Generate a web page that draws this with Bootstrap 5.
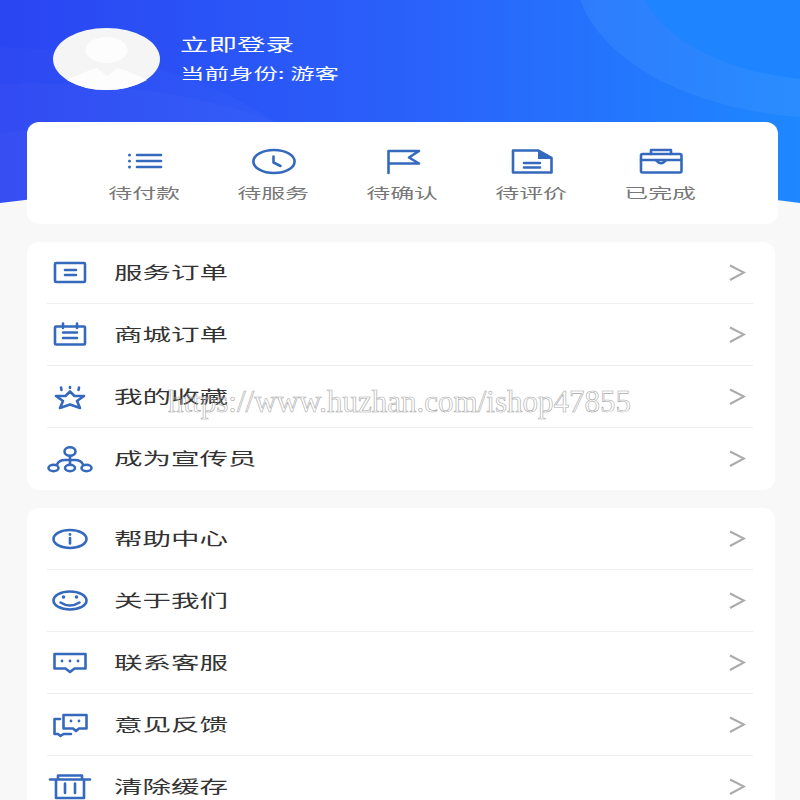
<!DOCTYPE html>
<html lang="zh-CN">
<head>
    <meta charset="UTF-8">
    <meta name="viewport" content="width=device-width, initial-scale=1.0">
    <title>个人中心</title>
    <link href="https://cdn.jsdelivr.net/npm/bootstrap@5.3.0/dist/css/bootstrap.min.css" rel="stylesheet">
    <style>
        html, body {
            height: 800px;
            overflow: hidden;
        }
        body {
            background-color: #f8f8f8;
            font-family: "Noto Sans CJK SC", "Liberation Sans", sans-serif;
            position: relative;
        }
        svg {
            display: block;
        }
        /* the screenshot is stretched sideways, so the text is too */
        .wide-text {
            display: inline-block;
            white-space: nowrap;
            transform: scaleX(1.7);
            transform-origin: left center;
        }
        .hero-bg {
            position: absolute;
            top: 0;
            left: 0;
        }
        .page-wrap {
            position: relative;
        }
        .hero-row {
            height: 122px;
            padding: 28px 0 0 53px;
        }
        .avatar-box {
            width: 107px;
            height: 62px;
            margin-right: 21px;
        }
        .user-name {
            font-size: 16.8px;
            line-height: 22px;
            margin-top: 5px;
            margin-left: -1px;
        }
        .user-role {
            font-size: 14.4px;
            line-height: 20px;
            margin-top: 8px;
            margin-left: -1px;
        }
        .order-card {
            margin: 0 22px 18px 27px;
            height: 102px;
            padding: 26px 53px 0;
            border: 0;
            border-radius: 12px;
        }
        .order-col {
            width: 129px;
            flex: none;
        }
        .order-label {
            font-size: 14.1px;
            line-height: 20px;
            margin-top: 6px;
            margin-left: -1px;
            color: #777;
        }
        .order-label .wide-text {
            transform-origin: center center;
        }
        .menu-card {
            margin: 0 25px 18px 27px;
            border: 0;
            border-radius: 12px;
            overflow: hidden;
        }
        .menu-row {
            height: 62px;
            margin: 0 22px 0 20px;
            padding: 0;
            background: none;
            border-color: #eeeeee;
        }
        .menu-row svg.menu-icon {
            margin-left: -2px;
            margin-right: 19px;
        }
        .menu-text {
            font-size: 16.8px;
            line-height: 24px;
            margin-top: -2px;
            color: #333;
        }
        .menu-arrow {
            margin-left: auto;
            margin-right: 7px;
        }
        .watermark {
            position: absolute;
            left: 168px;
            top: 384px;
            font-family: "Liberation Serif", serif;
            font-size: 31px;
            line-height: 36px;
            color: transparent;
            -webkit-text-stroke: 0.6px #a8a8a8;
            white-space: nowrap;
        }
        .ic {
            fill: none;
            stroke: #3569bd;
            stroke-width: 2.6;
            stroke-linecap: round;
            stroke-linejoin: round;
        }
        .ic-fill {
            fill: #3569bd;
            stroke: none;
        }
    </style>
</head>
<body>
    <svg class="hero-bg" width="800" height="215" viewBox="0 0 800 215">
        <defs>
            <linearGradient id="heroGrad" x1="0" y1="0" x2="1" y2="0">
                <stop offset="0" stop-color="#2a45f2"/>
                <stop offset="0.5" stop-color="#2a60fa"/>
                <stop offset="1" stop-color="#1e88ff"/>
            </linearGradient>
        </defs>
        <rect width="800" height="215" fill="url(#heroGrad)"/>
        <path d="M0 47 C110 50 210 75 275 122 L275 215 L0 215 Z" fill="#ffffff" opacity="0.02"/>
        <path d="M0 84 C100 80 210 95 275 122 L275 215 L0 215 Z" fill="#ffffff" opacity="0.02"/>
        <path d="M0 133 C60 125 120 125 170 135 L170 215 L0 215 Z" fill="#ffffff" opacity="0.02"/>
        <ellipse cx="830" cy="-30" rx="255" ry="148" fill="#4d9bff" opacity="0.25"/>
        <ellipse cx="830" cy="-30" rx="192" ry="110" fill="#1f84ff"/>
        <path d="M0 203 Q400 150 800 203 V215 H0 Z" fill="#f8f8f8"/>
    </svg>

    <div class="page-wrap">
        <div class="hero-row d-flex">
            <div class="avatar-box">
                <svg width="107" height="62" viewBox="0 0 107 62">
                    <ellipse cx="53.5" cy="31" rx="53.5" ry="31" fill="#f5f5f6"/>
                    <ellipse cx="53.5" cy="22" rx="21" ry="13" fill="#fdfdfd"/>
                    <path d="M14 52 Q30 44 44 40 L54 48 L64 40 Q80 44 94 52 Q76 62 53.5 62 Q30 62 14 52 Z" fill="#fdfdfd"/>
                </svg>
            </div>
            <div class="text-white">
                <div class="user-name"><span class="wide-text">立即登录</span></div>
                <div class="user-role"><span class="wide-text">当前身份: 游客</span></div>
            </div>
        </div>

        <div class="card order-card flex-row">
            <div class="order-col d-flex flex-column align-items-center">
                <svg width="60" height="28" viewBox="0 0 60 28">
                    <circle class="ic-fill" cx="14.5" cy="7" r="1.5"/>
                    <circle class="ic-fill" cx="14.5" cy="13" r="1.5"/>
                    <circle class="ic-fill" cx="14.5" cy="19" r="1.5"/>
                    <path class="ic" d="M22 7H46M22 13H46M22 19H46"/>
                </svg>
                <div class="order-label"><span class="wide-text">待付款</span></div>
            </div>
            <div class="order-col d-flex flex-column align-items-center">
                <svg width="60" height="28" viewBox="0 0 60 28">
                    <ellipse class="ic" cx="30" cy="13.5" rx="20.6" ry="11.5"/>
                    <path class="ic" d="M29.5 8.5V14.5L36.5 18"/>
                </svg>
                <div class="order-label"><span class="wide-text">待服务</span></div>
            </div>
            <div class="order-col d-flex flex-column align-items-center">
                <svg width="60" height="28" viewBox="0 0 60 28">
                    <path class="ic" d="M15.5 25V3H46L36 9.5L46 15.5H15.5"/>
                </svg>
                <div class="order-label"><span class="wide-text">待确认</span></div>
            </div>
            <div class="order-col d-flex flex-column align-items-center">
                <svg width="60" height="28" viewBox="0 0 60 28">
                    <path class="ic" d="M11 2.5H36L49.5 10V24.5H11Z"/>
                    <path class="ic-fill" d="M36 2.5L49.5 10V11H36Z"/>
                    <path class="ic" d="M22 15H38M22 19.5H38"/>
                </svg>
                <div class="order-label"><span class="wide-text">待评价</span></div>
            </div>
            <div class="order-col d-flex flex-column align-items-center">
                <svg width="60" height="28" viewBox="0 0 60 28">
                    <rect class="ic" x="10" y="6" width="40.5" height="18.5" rx="1.5"/>
                    <path class="ic" d="M20 6V2H40V6M10 12H50M25 12.5Q30 18 35 12.5"/>
                </svg>
                <div class="order-label"><span class="wide-text">已完成</span></div>
            </div>
        </div>

        <div class="card menu-card">
            <ul class="list-group list-group-flush">
                <li class="list-group-item menu-row d-flex align-items-center">
                    <svg class="menu-icon" width="50" height="30" viewBox="0 0 50 30">
                        <rect class="ic" x="10" y="5" width="30" height="19" rx="1"/>
                        <path class="ic" d="M20 12H31M20 17H31"/>
                    </svg>
                    <span class="menu-text wide-text">服务订单</span>
                    <svg class="menu-arrow" width="17" height="18" viewBox="0 0 17 18">
                        <path d="M1 1.5L15 8.5L1 16" fill="none" stroke="#aaaaaa" stroke-width="2"/>
                    </svg>
                </li>
                <li class="list-group-item menu-row d-flex align-items-center">
                    <svg class="menu-icon" width="50" height="30" viewBox="0 0 50 30">
                        <rect class="ic" x="10" y="6.5" width="30" height="18" rx="1"/>
                        <path class="ic" d="M18 3.5V8M32 3.5V8M18 12.5H32M18 18H32"/>
                    </svg>
                    <span class="menu-text wide-text">商城订单</span>
                    <svg class="menu-arrow" width="17" height="18" viewBox="0 0 17 18">
                        <path d="M1 1.5L15 8.5L1 16" fill="none" stroke="#aaaaaa" stroke-width="2"/>
                    </svg>
                </li>
                <li class="list-group-item menu-row d-flex align-items-center">
                    <svg class="menu-icon" width="50" height="30" viewBox="0 0 50 30">
                        <path class="ic" d="M25 9.5L29.5 14H39L32 19L35 26L25 22.5L15 26L18 19L11 14H20.5Z"/>
                        <path class="ic" d="M16 5.5L16.5 8M25 5V6M34 5.5L33.5 8"/>
                    </svg>
                    <span class="menu-text wide-text">我的收藏</span>
                    <svg class="menu-arrow" width="17" height="18" viewBox="0 0 17 18">
                        <path d="M1 1.5L15 8.5L1 16" fill="none" stroke="#aaaaaa" stroke-width="2"/>
                    </svg>
                </li>
                <li class="list-group-item menu-row d-flex align-items-center border-0">
                    <svg class="menu-icon" width="50" height="30" viewBox="0 0 50 30">
                        <ellipse class="ic" cx="25" cy="7.5" rx="5.5" ry="4.2"/>
                        <ellipse class="ic" cx="8.5" cy="24" rx="5" ry="3.2"/>
                        <ellipse class="ic" cx="25" cy="24" rx="5" ry="3.2"/>
                        <ellipse class="ic" cx="41.5" cy="24" rx="5" ry="3.2"/>
                        <path class="ic" d="M25 12V20.5M12 20.5Q14 16 20 16H30Q36 16 38 20.5"/>
                    </svg>
                    <span class="menu-text wide-text">成为宣传员</span>
                    <svg class="menu-arrow" width="17" height="18" viewBox="0 0 17 18">
                        <path d="M1 1.5L15 8.5L1 16" fill="none" stroke="#aaaaaa" stroke-width="2"/>
                    </svg>
                </li>
            </ul>
        </div>

        <div class="card menu-card">
            <ul class="list-group list-group-flush">
                <li class="list-group-item menu-row d-flex align-items-center">
                    <svg class="menu-icon" width="50" height="30" viewBox="0 0 50 30">
                        <ellipse class="ic" cx="25" cy="15" rx="16.5" ry="9"/>
                        <circle class="ic-fill" cx="25" cy="10.5" r="1.4"/>
                        <path class="ic" d="M25 14V19.5"/>
                    </svg>
                    <span class="menu-text wide-text">帮助中心</span>
                    <svg class="menu-arrow" width="17" height="18" viewBox="0 0 17 18">
                        <path d="M1 1.5L15 8.5L1 16" fill="none" stroke="#aaaaaa" stroke-width="2"/>
                    </svg>
                </li>
                <li class="list-group-item menu-row d-flex align-items-center">
                    <svg class="menu-icon" width="50" height="30" viewBox="0 0 50 30">
                        <ellipse class="ic" cx="25" cy="14.5" rx="16.5" ry="9"/>
                        <circle class="ic-fill" cx="18.5" cy="11" r="1.8"/>
                        <circle class="ic-fill" cx="31.5" cy="11" r="1.8"/>
                        <path class="ic" d="M15.5 16.5Q25 22.5 34.5 16.5"/>
                    </svg>
                    <span class="menu-text wide-text">关于我们</span>
                    <svg class="menu-arrow" width="17" height="18" viewBox="0 0 17 18">
                        <path d="M1 1.5L15 8.5L1 16" fill="none" stroke="#aaaaaa" stroke-width="2"/>
                    </svg>
                </li>
                <li class="list-group-item menu-row d-flex align-items-center">
                    <svg class="menu-icon" width="50" height="30" viewBox="0 0 50 30">
                        <path class="ic" d="M9.5 6H40.5V20.5H29.5L25 24L20.5 20.5H9.5Z"/>
                        <circle class="ic-fill" cx="17" cy="13" r="1.4"/>
                        <circle class="ic-fill" cx="25" cy="13" r="1.4"/>
                        <circle class="ic-fill" cx="33" cy="13" r="1.4"/>
                    </svg>
                    <span class="menu-text wide-text">联系客服</span>
                    <svg class="menu-arrow" width="17" height="18" viewBox="0 0 17 18">
                        <path d="M1 1.5L15 8.5L1 16" fill="none" stroke="#aaaaaa" stroke-width="2"/>
                    </svg>
                </li>
                <li class="list-group-item menu-row d-flex align-items-center">
                    <svg class="menu-icon" width="50" height="30" viewBox="0 0 50 30">
                        <path class="ic" d="M18.5 5H41.5V18.5H34L31 21L28 18.5H18.5Z"/>
                        <circle class="ic-fill" cx="26" cy="11" r="1.4"/>
                        <circle class="ic-fill" cx="34" cy="11" r="1.4"/>
                        <path class="ic" d="M15 9H9.5V24H13L15.5 26L18.5 24H26"/>
                    </svg>
                    <span class="menu-text wide-text">意见反馈</span>
                    <svg class="menu-arrow" width="17" height="18" viewBox="0 0 17 18">
                        <path d="M1 1.5L15 8.5L1 16" fill="none" stroke="#aaaaaa" stroke-width="2"/>
                    </svg>
                </li>
                <li class="list-group-item menu-row d-flex align-items-center border-0">
                    <svg class="menu-icon" width="50" height="30" viewBox="0 0 50 30">
                        <path class="ic" d="M5 7.5H45M13 7.5V3.5H37V7.5M11 7.5V26H39V7.5M20 11.5V21M30 11.5V21"/>
                    </svg>
                    <span class="menu-text wide-text">清除缓存</span>
                    <svg class="menu-arrow" width="17" height="18" viewBox="0 0 17 18">
                        <path d="M1 1.5L15 8.5L1 16" fill="none" stroke="#aaaaaa" stroke-width="2"/>
                    </svg>
                </li>
            </ul>
        </div>
    </div>

    <div class="watermark">https://www.huzhan.com/ishop47855</div>

    <script src="https://cdn.jsdelivr.net/npm/bootstrap@5.3.0/dist/js/bootstrap.bundle.min.js"></script>
</body>
</html>
